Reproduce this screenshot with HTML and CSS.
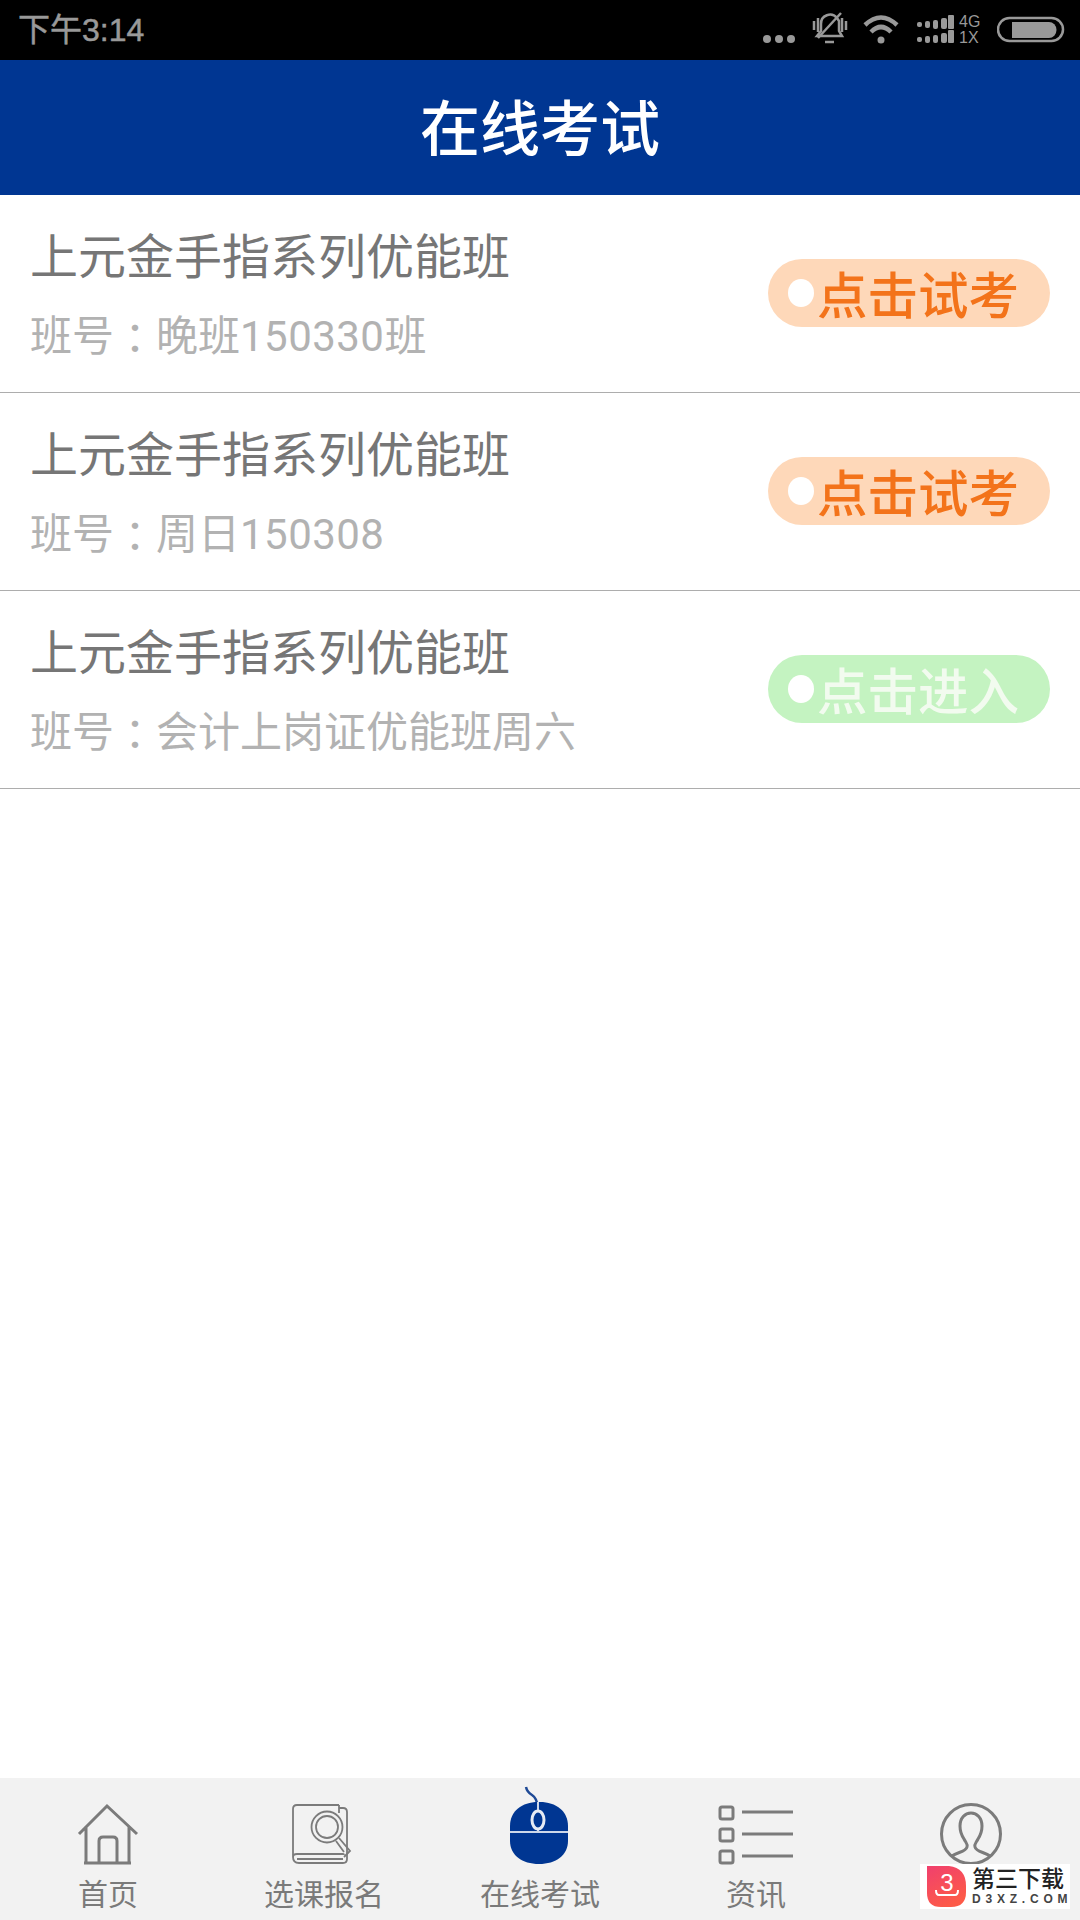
FILE: index.html
```html
<!DOCTYPE html>
<html lang="zh-CN">
<head>
<meta charset="utf-8">
<title>在线考试</title>
<link rel="stylesheet" href="styles.css">
</head>
<body>
<div class="app">
  <div class="statusbar">
    <span class="time">下午3:14</span>
    <div class="status-icons">
      <svg class="ic-dots" width="34" height="60" viewBox="0 0 34 60"><circle cx="5" cy="39" r="4"/><circle cx="17" cy="39" r="4"/><circle cx="29" cy="39" r="4"/></svg>
      <svg class="ic-bell" width="36" height="60" viewBox="0 0 36 60"><path class="st" d="M9 31V24a9 9 0 0 1 16-6l2 3v10l3 5H5l4-5z"/><path class="st" d="M13 42h9" stroke-width="4"/><path class="st" d="M2 21v9M34 21v9M6 18v14M30 18v14"/><path class="st" d="M6 38 L29 13" stroke-width="3"/></svg>
      <svg class="ic-wifi" width="36" height="60" viewBox="0 0 36 60"><path class="st wifi-arc" d="M2 25Q18 10 34 25"/><path class="st wifi-arc" d="M8 32Q18 22 28 32"/><circle cx="18" cy="40" r="3.500"/></svg>
      <svg class="ic-signal" width="37" height="60" viewBox="0 0 37 60"><rect x="0" y="22" width="5" height="5" rx="2"/><rect x="8" y="21" width="5" height="7" rx="2"/><rect x="16" y="20" width="5" height="9" rx="2"/><rect x="24" y="18" width="6" height="11" rx="2"/><rect x="31" y="15" width="6" height="14" rx="1"/><rect x="0" y="37" width="5" height="5" rx="2"/><rect x="8" y="36" width="5" height="7" rx="2"/><rect x="16" y="35" width="5" height="8" rx="2"/><rect x="24" y="33" width="6" height="10" rx="2"/><rect x="31" y="30" width="6" height="13" rx="1"/></svg>
      <div class="net"><span>4G</span><span>1X</span></div>
      <svg class="ic-batt" width="68" height="60" viewBox="0 0 68 60"><rect class="st" x="1" y="18" width="65" height="23" rx="11.500" stroke-width="2"/><path d="M15 22h37a7.500 8 0 0 1 0 16H15z"/></svg>
    </div>
  </div>

  <header class="appbar">在线考试</header>

  <main class="list">
    <div class="row">
      <div class="info">
        <div class="title">上元金手指系列优能班</div>
        <div class="sub">班号<span class="colon" lang="zh-TW">：</span>晚班<span class="num">150330</span>班</div>
      </div>
      <div class="btn btn-try"><i class="dot"></i><span>点击试考</span></div>
    </div>
    <div class="row">
      <div class="info">
        <div class="title">上元金手指系列优能班</div>
        <div class="sub">班号<span class="colon" lang="zh-TW">：</span>周日<span class="num">150308</span></div>
      </div>
      <div class="btn btn-try"><i class="dot"></i><span>点击试考</span></div>
    </div>
    <div class="row">
      <div class="info">
        <div class="title">上元金手指系列优能班</div>
        <div class="sub">班号<span class="colon" lang="zh-TW">：</span>会计上岗证优能班周六</div>
      </div>
      <div class="btn btn-enter"><i class="dot"></i><span>点击进入</span></div>
    </div>
  </main>

  <nav class="tabbar">
    <div class="tab">
      <svg class="tab-ic" width="80" height="80" viewBox="0 0 80 80"><path d="M11 48 39 20 69 48M18 41V77M61 41V77M16 77H63M31 77V55q0-4 4-4h10q4 0 4 4V77"/></svg>
      <span class="tab-label">首页</span>
    </div>
    <div class="tab">
      <svg class="tab-ic thin" width="80" height="80" viewBox="0 0 80 80"><path d="M55 19H13q-4 0-4 4V71q0 6 6 6H59q4 0 4-4V26q0-4-4-4H55M55 19V27M9 71q0-3 4-3H59q1 0 1 1M13 73H59"/><circle cx="43" cy="41" r="15.500"/><circle cx="43" cy="41" r="11"/><path d="M55 52 66 65 60 71M52 55 60 66"/></svg>
      <span class="tab-label">选课报名</span>
    </div>
    <div class="tab">
      <svg class="tab-ic mouse" width="80" height="80" viewBox="0 0 80 80"><path class="cable" d="M26 1q1 5 6 8t6 13"/><path class="shell" d="M38 16h2c16 0 28 9 28 24v15c0 14-12 23-29 23S10 69 10 55V40c0-15 12-24 28-24z"/><path class="seam" d="M10 46H68M38 16V24M38 44V46"/><ellipse class="wheel-ring" cx="38" cy="34" rx="6" ry="9"/></svg>
      <span class="tab-label">在线考试</span>
    </div>
    <div class="tab">
      <svg class="tab-ic" width="80" height="80" viewBox="0 0 80 80"><rect x="4" y="21" width="13" height="12" rx="2"/><rect x="4" y="43" width="13" height="12" rx="2"/><rect x="4" y="65" width="13" height="12" rx="2"/><path d="M26 26H77M26 48H77M26 70H77"/></svg>
      <span class="tab-label">资讯</span>
    </div>
    <div class="tab">
      <svg class="tab-ic" width="80" height="80" viewBox="0 0 80 80"><circle cx="39" cy="48" r="29.500"/><path d="M20 70c5-4 14-4 15-9 1-3-1-4-3-8-2-3-4-6-4-13 0-8 5-13 11-13s11 5 11 13c0 7-2 10-4 13-2 4-4 5-3 8 1 5 10 5 15 9"/></svg>
      <span class="tab-label"></span>
    </div>
  </nav>

  <div class="watermark">
    <svg class="wm-logo" width="40" height="41" viewBox="0 0 40 41">
      <defs><linearGradient id="wmg" x1="0" y1="0" x2="0.500" y2="1"><stop offset="0" stop-color="#f0406e"/><stop offset="1" stop-color="#fd5a48"/></linearGradient></defs>
      <path fill="url(#wmg)" d="M0 0H22Q39 2 39 20V26Q39 41 24 41H14Q0 41 0 27z"/>
      <text class="wm-three" x="20" y="25" text-anchor="middle">3</text>
      <path class="wm-tray" d="M9 24q0 5 3 5H28q3 0 3-5"/>
    </svg>
    <div class="wm-text">
      <div class="wm-cn">第三下载</div>
      <div class="wm-en">D3XZ.COM</div>
    </div>
  </div>
</div>
</body>
</html>
```

FILE: styles.css
```css
* { box-sizing: border-box; }
html, body { margin: 0; padding: 0; }
body { background: #fff; font-family: Roboto, "Noto Sans CJK SC", sans-serif; }

.app { position: relative; width: 1080px; height: 1920px; display: flex; flex-direction: column; overflow: hidden; }

.statusbar { height: 60px; flex: none; background: #000; display: flex; justify-content: space-between; align-items: center; padding: 0 15px 0 18px; color: #999; }
.time { font-family: "Liberation Sans", "Noto Sans CJK SC", sans-serif; font-size: 32px; line-height: 60px; -webkit-text-stroke: 0.500px #999; }
.status-icons { display: flex; align-items: center; height: 60px; }
.status-icons svg { display: block; fill: #999; }
.status-icons .st { fill: none; stroke: #999; stroke-width: 2.500; }
.status-icons .wifi-arc { stroke-width: 4.500; }
.ic-bell { margin-left: 16px; }
.ic-wifi { margin-left: 15px; }
.ic-signal { margin-left: 18px; }
.net { display: flex; flex-direction: column; margin-left: 5px; width: 24px; font-family: "Liberation Sans", sans-serif; font-size: 16px; line-height: 16px; padding-top: 0; }
.ic-batt { margin-left: 14px; }

.appbar { height: 135px; flex: none; background: #003692; color: #fff; font-size: 60px; font-weight: 500; display: flex; align-items: center; justify-content: center; padding-bottom: 7px; }

.list { flex: 1; }
.row { height: 198px; border-bottom: 1px solid #adadad; display: flex; align-items: center; justify-content: space-between; padding: 0 30px; }
.info { padding-top: 2px; }
.title { font-size: 48px; line-height: 64px; color: #767676; }
.sub { font-size: 42px; line-height: 56px; height: 56px; color: #b2b2b2; margin-top: 18px; }
.colon { font-family: "Noto Sans CJK TC", sans-serif; vertical-align: -3px; }
.num { letter-spacing: 0.450px; }

.btn { width: 282px; height: 68px; border-radius: 34px; display: flex; align-items: center; padding-left: 20px; gap: 3px; font-size: 50.500px; font-weight: 500; margin-bottom: 2px; }
.btn span { line-height: 68px; position: relative; top: 4px; }
.dot { width: 26px; height: 28px; border-radius: 50%; background: #fff; flex: none; }
.btn-try { background: #fed8b9; color: #f3731a; }
.btn-enter { background: #c4f3c1; color: #f2fbef; }

.tabbar { height: 142px; flex: none; background: #f2f2f2; display: grid; grid-template-columns: repeat(5, 1fr); padding-top: 8px; }
.tab { display: flex; flex-direction: column; align-items: center; }
.tab-ic { display: block; fill: none; stroke: #7b7b7b; stroke-width: 3; }
.tab-ic.thin { stroke-width: 1.800; }
.tab-label { font-size: 30px; line-height: 36px; color: #7a7a7a; margin-top: 11px; }

.mouse .cable { stroke: #1f4a96; stroke-width: 2.500; }
.mouse .shell { fill: #003692; stroke: none; }
.mouse .seam { stroke: #cdd8ea; stroke-width: 2; }
.mouse .wheel-ring { fill: #003692; stroke: #e6ebf4; stroke-width: 3; }

.watermark { position: absolute; left: 920px; top: 1864px; width: 150px; height: 45px; background: #fff; display: flex; align-items: center; padding-left: 7px; gap: 5px; }
.wm-logo { display: block; flex: none; }
.wm-three { font-family: "Liberation Sans", sans-serif; font-size: 24px; fill: #fff; }
.wm-tray { fill: none; stroke: #fff; stroke-width: 2; }
.wm-text { width: 93px; }
.wm-cn { font-size: 23px; font-weight: 500; line-height: 25px; color: #222; white-space: nowrap; }
.wm-en { font-family: "Liberation Sans", sans-serif; font-weight: bold; font-size: 12px; line-height: 14px; letter-spacing: 4.800px; color: #444; white-space: nowrap; }
```
